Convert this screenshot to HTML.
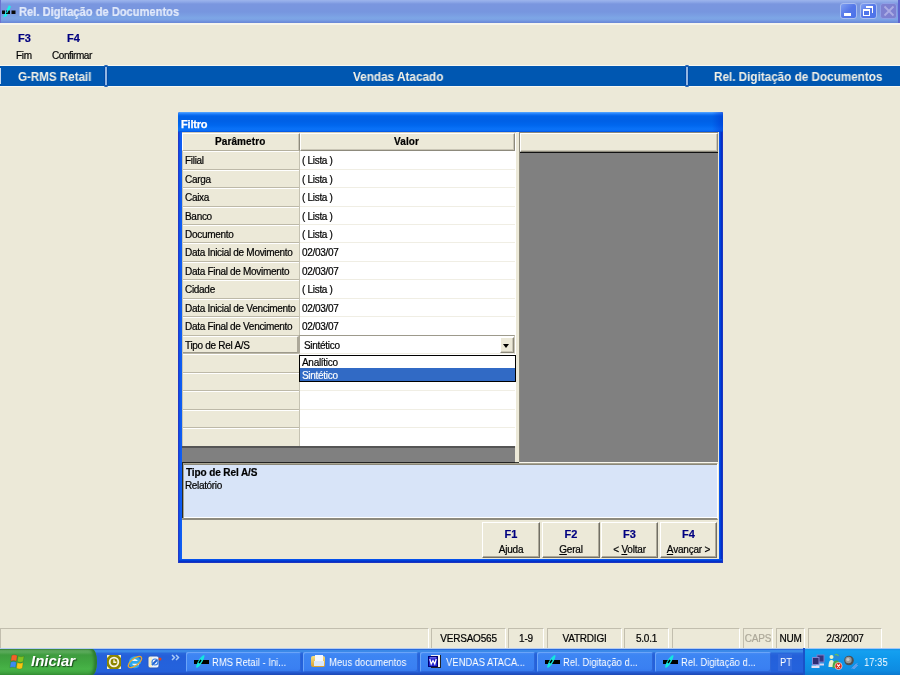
<!DOCTYPE html>
<html><head><meta charset="utf-8">
<style>
*{margin:0;padding:0;box-sizing:border-box}
html,body{width:900px;height:675px;overflow:hidden;background:#ECE9D8;font-family:"Liberation Sans",sans-serif;position:relative}
.a{position:absolute}
.t{position:absolute;white-space:nowrap;line-height:1;transform-origin:0 0;will-change:transform}
#tb{left:0;top:0;width:900px;height:23px;background:linear-gradient(#9DB5EC 0,#8DA8E8 2px,#7A96DF 4px,#7796DF 12px,#7DA6E6 18px,#7AA0E4 20px,#6D8CDA 22px,#6A88D6 23px)}
.tbtn{top:3px;width:17px;height:16px;border-radius:3px;border:1px solid #A9BDF0;background:linear-gradient(135deg,#7FA0F2 0,#5577E8 50%,#4A73EA 100%)}
.sep{top:65px;width:4px;height:22px}
.sep i{position:absolute;left:1px;top:2px;width:2px;height:18px;background:#94B6E2;box-shadow:-1px 0 0 #0049A6,1px 0 0 #0049A6}
.sep b{position:absolute;left:0;width:4px;height:2px;border-radius:50%;background:#1A5CB0}
.ht{color:#F2F0E6;font-weight:bold;font-size:12px}
.hc{background:#ECE9D8;border-top:1px solid #fff;border-left:1px solid #fff;border-right:1px solid #8D8A7C;border-bottom:1px solid #8D8A7C;box-shadow:inset -1px -1px 0 #C9C5B5}
.c1{font-size:10px;color:#000;letter-spacing:-0.3px;-webkit-text-stroke:0.2px #000}
.rg{-webkit-text-stroke:0.2px #000}
.btn{top:522px;width:58px;height:36px;background:#ECE9D8;border-top:1px solid #fff;border-left:1px solid #fff;border-right:1px solid #716F64;border-bottom:1px solid #716F64;box-shadow:inset -1px -1px 0 #ACA899}
.fk{font-size:11px;font-weight:bold;color:#000080;-webkit-text-stroke:0.2px #000080}
.sp{top:628px;height:20px;border-top:1px solid #C2BEAE;border-left:1px solid #C2BEAE;border-right:1px solid #fff}
.st{font-size:10px;color:#000;letter-spacing:-0.2px;-webkit-text-stroke:0.2px currentColor}
.tk{top:652px;height:20px;border-radius:2px;background:linear-gradient(#4A8EF7 0,#3D85F3 3px,#3A80F2 16px,#3479EC 20px);box-shadow:inset 1px 1px 0 #6AA4F9, inset -1px -1px 0 #2D66D8}
.tt{font-size:11px;color:#fff;transform:scaleX(0.86)}
</style></head><body>
<div id="tb" class="a"></div>
<div class="a" style="left:0;top:0;width:1px;height:23px;background:#6C73D0"></div>
<div class="a" style="left:898px;top:0;width:2px;height:23px;background:#5E62CE"></div>
<svg class="a" style="left:0;top:2px" width="18" height="18"><path d="M3.2,15.2 L6.6,14.2 L11,4.6 L8.8,3.2 Z" fill="#18F0E8"/><path d="M2,8.5H5V12H2ZM6,8.5H10V12H6ZM11.5,8.5H15.5V12H11.5Z" fill="#0A0A0A"/><path d="M6.6,11 L8.5,7" stroke="#18F0E8" stroke-width="1.2"/></svg>
<div class="t" style="left:19px;top:6px;font-size:12.5px;font-weight:bold;color:#E2EAFA;transform:scaleX(0.89);-webkit-text-stroke:0.2px #E2EAFA">Rel. Digitação de Documentos</div>
<div class="a tbtn" style="left:840px"><div class="a" style="left:3px;top:9px;width:7px;height:3px;background:#fff"></div></div>
<div class="a tbtn" style="left:860px"><div class="a" style="left:5px;top:2px;width:7px;height:7px;border-top:2px solid #fff;border-right:1px solid #fff"></div><div class="a" style="left:2px;top:5px;width:7px;height:7px;border:1px solid #fff;border-top-width:2px;background:#4F76EA"></div></div>
<div class="a tbtn" style="left:880px;background:#7E80D0;border-color:#8E9EE6"><svg class="a" style="left:0;top:0" width="15" height="14"><path d="M3.5 2.5L12.5 11.5M12.5 2.5L3.5 11.5" stroke="#ABABE4" stroke-width="1.8"/></svg></div>
<div class="a" style="left:0;top:23px;width:900px;height:2px;background:#F7F5EC"></div>
<div class="t fk" style="left:18px;top:33px">F3</div>
<div class="t rg" style="left:16px;top:51px;font-size:10px;letter-spacing:-0.3px">Fim</div>
<div class="t fk" style="left:67px;top:33px">F4</div>
<div class="t rg" style="left:52px;top:51px;font-size:10px;letter-spacing:-0.45px">Confirmar</div>
<div class="a" style="left:0;top:65px;width:900px;height:22px;background:#F8F7F0"></div>
<div class="a" style="left:0;top:66px;width:900px;height:20px;background:#0057B1"></div>
<div class="a sep" style="left:104px"><i></i><b style="top:0"></b><b style="top:20px"></b></div>
<div class="a" style="left:0;top:68px;width:1px;height:16px;background:#C8DAF0"></div>
<div class="a sep" style="left:685px"><i></i><b style="top:0"></b><b style="top:20px"></b></div>
<div class="t ht" style="left:18px;top:71px;transform:scaleX(0.965)">G-RMS Retail</div>
<div class="t ht" style="left:353px;top:71px;transform:scaleX(0.98)">Vendas Atacado</div>
<div class="t ht" style="left:714px;top:71px;transform:scaleX(0.975)">Rel. Digitação de Documentos</div>
<div class="a" style="left:178px;top:112px;width:545px;height:451px;background:#0032CC;border-radius:2px 2px 0 0"></div>
<div class="a" style="left:178px;top:112px;width:545px;height:20px;border-radius:2px 2px 0 0;background:linear-gradient(#5AA8FF 0,#3A94FF 1px,#1A7AFA 2px,#0062E8 4px,#0060E6 9px,#0066EE 13px,#0A72F8 17px,#086CF4 19px,#0048D8 20px)"></div>
<div class="a" style="left:712px;top:112px;width:11px;height:20px;background:linear-gradient(90deg,rgba(0,40,200,0),rgba(0,40,200,.45))"></div>
<div class="a" style="left:178px;top:132px;width:1px;height:431px;background:#2238C8"></div>
<div class="a" style="left:179px;top:132px;width:3px;height:428px;background:linear-gradient(90deg,#0846E0,#1262F5 70%,#0A58F0)"></div>
<div class="a" style="left:719px;top:132px;width:4px;height:431px;background:linear-gradient(90deg,#0A5AF4 0,#0048E4 25%,#0030C8 60%,#2838C0 100%)"></div>
<div class="a" style="left:179px;top:559px;width:543px;height:4px;background:linear-gradient(#0A5AF4 0,#0048E4 25%,#0030C8 60%,#2838C0 100%)"></div>
<div class="a" style="left:182px;top:132px;width:537px;height:427px;background:#ECE9D8"></div>
<div class="t" style="left:181px;top:119px;font-size:11px;font-weight:bold;color:#fff;letter-spacing:-0.2px;-webkit-text-stroke:0.25px #fff">Filtro</div>
<div class="a" style="left:182px;top:132px;width:334px;height:314px;background:#fff"></div>
<div class="a" style="left:182px;top:132px;width:117px;height:314px;background:#ECE9D8"></div>
<div class="a" style="left:182px;top:132px;width:334px;height:1px;background:#CFCBBB"></div>
<div class="a hc" style="left:182px;top:133px;width:118px;height:18px;border-bottom-color:#B4B09E;box-shadow:inset -1px 0 0 #C9C5B5"></div>
<div class="a hc" style="left:300px;top:133px;width:215px;height:18px"></div>
<div class="t rg" style="left:215px;top:137px;font-size:10px;font-weight:bold;letter-spacing:0.1px">Parâmetro</div>
<div class="t rg" style="left:394px;top:137px;font-size:10px;font-weight:bold;letter-spacing:0.1px">Valor</div>
<div class="a" style="left:183px;top:151px;width:116px;height:1px;background:#fff"></div>
<div class="a" style="left:182px;top:169px;width:117px;height:1px;background:#BDB9A8"></div>
<div class="a" style="left:300px;top:169px;width:215px;height:1px;background:#F0EEE4"></div>
<div class="t c1" style="left:185px;top:156px">Filial</div>
<div class="t c1" style="left:302px;top:156px">( Lista )</div>
<div class="a" style="left:183px;top:170px;width:116px;height:1px;background:#fff"></div>
<div class="a" style="left:182px;top:187px;width:117px;height:1px;background:#BDB9A8"></div>
<div class="a" style="left:300px;top:187px;width:215px;height:1px;background:#F0EEE4"></div>
<div class="t c1" style="left:185px;top:175px">Carga</div>
<div class="t c1" style="left:302px;top:175px">( Lista )</div>
<div class="a" style="left:183px;top:188px;width:116px;height:1px;background:#fff"></div>
<div class="a" style="left:182px;top:206px;width:117px;height:1px;background:#BDB9A8"></div>
<div class="a" style="left:300px;top:206px;width:215px;height:1px;background:#F0EEE4"></div>
<div class="t c1" style="left:185px;top:193px">Caixa</div>
<div class="t c1" style="left:302px;top:193px">( Lista )</div>
<div class="a" style="left:183px;top:207px;width:116px;height:1px;background:#fff"></div>
<div class="a" style="left:182px;top:224px;width:117px;height:1px;background:#BDB9A8"></div>
<div class="a" style="left:300px;top:224px;width:215px;height:1px;background:#F0EEE4"></div>
<div class="t c1" style="left:185px;top:212px">Banco</div>
<div class="t c1" style="left:302px;top:212px">( Lista )</div>
<div class="a" style="left:183px;top:225px;width:116px;height:1px;background:#fff"></div>
<div class="a" style="left:182px;top:242px;width:117px;height:1px;background:#BDB9A8"></div>
<div class="a" style="left:300px;top:242px;width:215px;height:1px;background:#F0EEE4"></div>
<div class="t c1" style="left:185px;top:230px">Documento</div>
<div class="t c1" style="left:302px;top:230px">( Lista )</div>
<div class="a" style="left:183px;top:243px;width:116px;height:1px;background:#fff"></div>
<div class="a" style="left:182px;top:261px;width:117px;height:1px;background:#BDB9A8"></div>
<div class="a" style="left:300px;top:261px;width:215px;height:1px;background:#F0EEE4"></div>
<div class="t c1" style="left:185px;top:248px">Data Inicial de Movimento</div>
<div class="t c1" style="left:302px;top:248px">02/03/07</div>
<div class="a" style="left:183px;top:262px;width:116px;height:1px;background:#fff"></div>
<div class="a" style="left:182px;top:279px;width:117px;height:1px;background:#BDB9A8"></div>
<div class="a" style="left:300px;top:279px;width:215px;height:1px;background:#F0EEE4"></div>
<div class="t c1" style="left:185px;top:267px">Data Final de Movimento</div>
<div class="t c1" style="left:302px;top:267px">02/03/07</div>
<div class="a" style="left:183px;top:280px;width:116px;height:1px;background:#fff"></div>
<div class="a" style="left:182px;top:298px;width:117px;height:1px;background:#BDB9A8"></div>
<div class="a" style="left:300px;top:298px;width:215px;height:1px;background:#F0EEE4"></div>
<div class="t c1" style="left:185px;top:285px">Cidade</div>
<div class="t c1" style="left:302px;top:285px">( Lista )</div>
<div class="a" style="left:183px;top:299px;width:116px;height:1px;background:#fff"></div>
<div class="a" style="left:182px;top:316px;width:117px;height:1px;background:#BDB9A8"></div>
<div class="a" style="left:300px;top:316px;width:215px;height:1px;background:#F0EEE4"></div>
<div class="t c1" style="left:185px;top:304px">Data Inicial de Vencimento</div>
<div class="t c1" style="left:302px;top:304px">02/03/07</div>
<div class="a" style="left:183px;top:317px;width:116px;height:1px;background:#fff"></div>
<div class="a" style="left:182px;top:335px;width:117px;height:1px;background:#BDB9A8"></div>
<div class="a" style="left:300px;top:335px;width:215px;height:1px;background:#F0EEE4"></div>
<div class="t c1" style="left:185px;top:322px">Data Final de Vencimento</div>
<div class="t c1" style="left:302px;top:322px">02/03/07</div>
<div class="a" style="left:183px;top:336px;width:116px;height:1px;background:#fff"></div>
<div class="a" style="left:182px;top:353px;width:117px;height:1px;background:#BDB9A8"></div>
<div class="a" style="left:300px;top:353px;width:215px;height:1px;background:#F0EEE4"></div>
<div class="t c1" style="left:185px;top:341px">Tipo de Rel A/S</div>
<div class="a" style="left:183px;top:354px;width:116px;height:1px;background:#fff"></div>
<div class="a" style="left:182px;top:372px;width:117px;height:1px;background:#BDB9A8"></div>
<div class="a" style="left:300px;top:372px;width:215px;height:1px;background:#F0EEE4"></div>
<div class="a" style="left:183px;top:373px;width:116px;height:1px;background:#fff"></div>
<div class="a" style="left:182px;top:390px;width:117px;height:1px;background:#BDB9A8"></div>
<div class="a" style="left:300px;top:390px;width:215px;height:1px;background:#F0EEE4"></div>
<div class="a" style="left:183px;top:391px;width:116px;height:1px;background:#fff"></div>
<div class="a" style="left:182px;top:409px;width:117px;height:1px;background:#BDB9A8"></div>
<div class="a" style="left:300px;top:409px;width:215px;height:1px;background:#F0EEE4"></div>
<div class="a" style="left:183px;top:410px;width:116px;height:1px;background:#fff"></div>
<div class="a" style="left:182px;top:427px;width:117px;height:1px;background:#BDB9A8"></div>
<div class="a" style="left:300px;top:427px;width:215px;height:1px;background:#F0EEE4"></div>
<div class="a" style="left:183px;top:428px;width:116px;height:1px;background:#fff"></div>
<div class="a" style="left:182px;top:446px;width:117px;height:1px;background:#BDB9A8"></div>
<div class="a" style="left:300px;top:446px;width:215px;height:1px;background:#F0EEE4"></div>
<div class="a" style="left:182px;top:151px;width:1px;height:295px;background:#C9C5B5"></div>
<div class="a" style="left:299px;top:151px;width:1px;height:295px;background:#C5C2B2"></div>
<div class="a" style="left:183px;top:336px;width:116px;height:17px;border-top:1px solid #fff;border-right:2px solid #ACA899;border-bottom:1px solid #9D9A8C"></div>
<div class="a" style="left:182px;top:446px;width:333px;height:17px;background:#808080;border-top:2px solid #555;border-bottom:1px solid #222"></div>
<div class="a" style="left:519px;top:132px;width:199px;height:330px;background:#808080;border-left:1px solid #8D8A7C;border-top:1px solid #8D8A7C"></div>
<div class="a hc" style="left:520px;top:133px;width:198px;height:19px"></div>
<div class="a" style="left:520px;top:152px;width:198px;height:1px;background:#111"></div>
<div class="a" style="left:519px;top:462px;width:199px;height:1px;background:#F8F6EE"></div>
<div class="a" style="left:515px;top:462px;width:4px;height:1px;background:#3A3A34"></div>
<div class="a" style="left:182px;top:463px;width:536px;height:57px;background:#D8E4F8;border-top:1px solid #A8A492;box-shadow:inset 0 1px 0 #8A8778,inset 0 -1px 0 #fff;border-left:2px solid #A8A490;border-bottom:2px solid #8D8A7E;border-right:1px solid #fff"></div>
<div class="a" style="left:182px;top:462px;width:1px;height:56px;background:#2A2A22"></div>
<div class="t rg" style="left:186px;top:468px;font-size:10px;font-weight:bold;letter-spacing:-0.1px">Tipo de Rel A/S</div>
<div class="t rg" style="left:185px;top:481px;font-size:10px;letter-spacing:-0.35px">Relatório</div>
<div class="a btn" style="left:482px;width:58px"></div>
<div class="t fk" style="left:482px;width:58px;text-align:center;top:529px">F1</div>
<div class="t rg" style="left:482px;width:58px;text-align:center;top:545px;font-size:10px;letter-spacing:-0.2px">Ajuda</div>
<div class="a btn" style="left:542px;width:58px"></div>
<div class="t fk" style="left:542px;width:58px;text-align:center;top:529px">F2</div>
<div class="t rg" style="left:542px;width:58px;text-align:center;top:545px;font-size:10px;letter-spacing:-0.2px"><u>G</u>eral</div>
<div class="a btn" style="left:601px;width:57px"></div>
<div class="t fk" style="left:601px;width:57px;text-align:center;top:529px">F3</div>
<div class="t rg" style="left:601px;width:57px;text-align:center;top:545px;font-size:10px;letter-spacing:-0.2px">&lt; <u>V</u>oltar</div>
<div class="a btn" style="left:660px;width:57px"></div>
<div class="t fk" style="left:660px;width:57px;text-align:center;top:529px">F4</div>
<div class="t rg" style="left:660px;width:57px;text-align:center;top:545px;font-size:10px;letter-spacing:-0.2px"><u>A</u>vançar &gt;</div>
<div class="a" style="left:299px;top:335px;width:216px;height:19px;background:#fff;border-top:1px solid #9D9A8C;border-left:1px solid #ACA899;border-right:1px solid #C9C5B5;border-bottom:1px solid #F0EEE4"></div>
<div class="t c1" style="left:304px;top:341px">Sintético</div>
<div class="a hc" style="left:500px;top:337px;width:14px;height:16px"></div>
<div class="a" style="left:503px;top:344px;width:0;height:0;border-left:3.5px solid transparent;border-right:3.5px solid transparent;border-top:4px solid #000"></div>
<div class="a" style="left:299px;top:355px;width:217px;height:27px;background:#fff;border:1px solid #000"></div>
<div class="a" style="left:300px;top:368px;width:215px;height:13px;background:#316AC5"></div>
<div class="t c1" style="left:302px;top:358px">Analítico</div>
<div class="t c1" style="left:302px;top:371px;color:#fff;-webkit-text-stroke:0.15px #fff">Sintético</div>
<div class="a sp" style="left:0;width:429px"></div>
<div class="a sp" style="left:431px;width:75px"></div>
<div class="t st" style="left:431px;width:75px;text-align:center;top:634px;color:#000">VERSAO565</div>
<div class="a sp" style="left:508px;width:36px"></div>
<div class="t st" style="left:508px;width:36px;text-align:center;top:634px;color:#000">1-9</div>
<div class="a sp" style="left:547px;width:75px"></div>
<div class="t st" style="left:547px;width:75px;text-align:center;top:634px;color:#000">VATRDIGI</div>
<div class="a sp" style="left:624px;width:45px"></div>
<div class="t st" style="left:624px;width:45px;text-align:center;top:634px;color:#000">5.0.1</div>
<div class="a sp" style="left:672px;width:68px"></div>
<div class="a sp" style="left:743px;width:30px"></div>
<div class="t st" style="left:743px;width:30px;text-align:center;top:634px;color:#ACA899">CAPS</div>
<div class="a sp" style="left:776px;width:29px"></div>
<div class="t st" style="left:776px;width:29px;text-align:center;top:634px;color:#000">NUM</div>
<div class="a sp" style="left:808px;width:74px"></div>
<div class="t st" style="left:808px;width:74px;text-align:center;top:634px;color:#000">2/3/2007</div>
<div class="a" style="left:0;top:648px;width:900px;height:27px;background:linear-gradient(#B4CCF2 0,#B4CCF2 1px,#2A6ADC 1px,#2A6ADC 2px,#3A88E8 2px,#3C8AE8 4px,#2A68DC 5px,#2460DA 8px,#2462DC 20px,#2460DA 24px,#2254C8 25px,#1C48B4 27px)"></div>
<div class="a" style="left:0;top:649px;width:97px;height:26px;border-radius:0 5px 5px 0/0 13px 13px 0;background:linear-gradient(#2F7A2F 0,#5DA95D 1px,#5AAA5A 3px,#3E9C3E 6px,#41A841 14px,#47B347 20px,#3A9A3A 26px);box-shadow:inset -3px 0 3px #2C7A2C"></div>
<svg class="a" style="left:9px;top:654px" width="17" height="16"><g stroke="rgba(0,0,0,.25)" stroke-width=".5"><path d="M2.6,1.6 C4.2,0.6 6.2,0.6 8.2,1.6 L7.4,7.2 C5.4,6.2 3.4,6.2 1.8,7.2 Z" fill="#F2622A"/><path d="M9.2,2 C11.2,3 13.2,3 15,2 L14.2,7.6 C12.4,8.6 10.4,8.6 8.4,7.6 Z" fill="#80C320"/><path d="M1.7,8.2 C3.3,7.2 5.3,7.2 7.3,8.2 L6.5,13.8 C4.5,12.8 2.5,12.8 0.9,13.8 Z" fill="#3C8CF0"/><path d="M8.3,8.6 C10.3,9.6 12.3,9.6 14.1,8.6 L13.3,14.2 C11.5,15.2 9.5,15.2 7.5,14.2 Z" fill="#FAC610"/></g></svg>
<div class="t" style="left:31px;top:653px;font-size:15px;font-weight:bold;font-style:italic;color:#fff;text-shadow:1px 1px 1px #1B4A1B">Iniciar</div>
<svg class="a" style="left:107px;top:655px" width="14" height="14"><rect width="14" height="14" fill="#8C8600"/><path d="M0,0H3L0,3ZM14,0H11L14,3ZM0,14H3L0,11ZM14,14H11L14,11Z" fill="#F4F0D0"/><circle cx="7" cy="7" r="4.3" stroke="#F8F4E0" stroke-width="1.8" fill="none"/><path d="M7,4.5V7.3H9.3" stroke="#F8F4E0" stroke-width="1.4" fill="none"/></svg>
<svg class="a" style="left:126px;top:653px" width="18" height="18"><circle cx="9" cy="9" r="4.8" fill="#E8F6FF"/><path d="M4.6,9.3 H13.4 A4.6,4.6 0 1 0 12.2,12.4" stroke="#2AA8F0" stroke-width="2.8" fill="none"/><ellipse cx="9" cy="9" rx="8" ry="3.6" transform="rotate(-38 9 9)" stroke="#E8A830" stroke-width="1.3" fill="none"/></svg>
<svg class="a" style="left:147px;top:654px" width="16" height="16"><rect x="1" y="2" width="11" height="12" rx="2" fill="#F0F4FC" stroke="#2A5AB8" stroke-width="1"/><rect x="2" y="3" width="3" height="10" fill="#F8F0C8"/><path d="M5,11 L10,6" stroke="#1E60D0" stroke-width="2"/><circle cx="8" cy="8" r="3" stroke="#3A80E0" stroke-width="1.2" fill="none"/><circle cx="13" cy="5" r="1.5" fill="#E04020"/></svg>
<svg class="a" style="left:171px;top:654px" width="10" height="7"><path d="M1 1L3.5 3.5L1 6M5 1L7.5 3.5L5 6" stroke="#A8CCF8" stroke-width="1.5" fill="none"/></svg>
<div class="a tk" style="left:186px;width:115px"></div>
<svg class="a" style="left:194px;top:654px" width="16" height="15"><path d="M0,6H15V10H0Z" fill="#000"/><path d="M2.5,13.8 C0.8,12.5 6.5,1.2 10.2,1 C11.8,2.5 6,13.8 2.5,13.8Z" fill="#14E6DE"/><path d="M5,9 L7,6" stroke="#000" stroke-width="1.5"/></svg>
<div class="t tt" style="left:212px;top:657px">RMS Retail - Ini...</div>
<div class="a tk" style="left:303px;width:115px"></div>
<div class="a" style="left:311px;top:656px;width:14px;height:11px;background:linear-gradient(#F8E080,#D8A030);border-radius:2px"></div>
<div class="a" style="left:315px;top:655px;width:8px;height:6px;background:#F4F8FF"></div>
<div class="a" style="left:314px;top:661px;width:10px;height:5px;background:#DCE8F8"></div>
<div class="t tt" style="left:329px;top:657px">Meus documentos</div>
<div class="a tk" style="left:420px;width:115px"></div>
<div class="a" style="left:431px;top:655px;width:10px;height:13px;background:#F4F4F0;border-right:1px solid #222;border-bottom:1px solid #222"></div>
<svg class="a" style="left:428px;top:656px" width="10" height="11"><rect x=".5" y=".5" width="9" height="10" fill="#2424D0" stroke="#000070"/><path d="M1.8,3 L3.2,8 L5,4.5 L6.8,8 L8.2,3" stroke="#fff" stroke-width="1.2" fill="none"/><path d="M2,1.8H8" stroke="#8080F0" stroke-width="1"/></svg>
<div class="t tt" style="left:446px;top:657px">VENDAS ATACA...</div>
<div class="a tk" style="left:537px;width:116px"></div>
<svg class="a" style="left:545px;top:654px" width="16" height="15"><path d="M0,6H15V10H0Z" fill="#000"/><path d="M2.5,13.8 C0.8,12.5 6.5,1.2 10.2,1 C11.8,2.5 6,13.8 2.5,13.8Z" fill="#14E6DE"/><path d="M5,9 L7,6" stroke="#000" stroke-width="1.5"/></svg>
<div class="t tt" style="left:563px;top:657px">Rel. Digitação d...</div>
<div class="a tk" style="left:655px;width:116px"></div>
<svg class="a" style="left:663px;top:654px" width="16" height="15"><path d="M0,6H15V10H0Z" fill="#000"/><path d="M2.5,13.8 C0.8,12.5 6.5,1.2 10.2,1 C11.8,2.5 6,13.8 2.5,13.8Z" fill="#14E6DE"/><path d="M5,9 L7,6" stroke="#000" stroke-width="1.5"/></svg>
<div class="t tt" style="left:681px;top:657px">Rel. Digitação d...</div>
<div class="a" style="left:778px;top:654px;width:14px;height:17px;background:#3A70E0;opacity:.6"></div>
<div class="t tt" style="left:780px;top:657px">PT</div>
<div class="a" style="left:803px;top:648px;width:97px;height:27px;background:linear-gradient(#A0C8F8 0,#A0C8F8 1px,#1590E8 1px,#14A0F0 3px,#0F96EA 12px,#0E8CE2 22px,#0C7AD0 27px);border-left:2px solid #1A52C8"></div>
<svg class="a" style="left:808px;top:650px" width="54" height="22"><rect x="9" y="5" width="7" height="7" fill="#34347E" stroke="#7A7AC8" stroke-width="1"/><path d="M8,13.5H16V15.5H8Z" fill="#D8D4F0"/><rect x="4.5" y="7.5" width="6.5" height="7" fill="#2E2E74" stroke="#8484D0" stroke-width="1"/><path d="M3.5,15.5H11.5V18H3.5Z" fill="#E4E0F4"/><circle cx="23.5" cy="7" r="2" fill="#F0F4C0"/><path d="M20.5,17 C20.5,11 22,10 23.5,10 C25,10 26.5,11 26.5,17Z" fill="#E8F0D0"/><circle cx="29" cy="6.5" r="3" fill="#2A8AD8"/><path d="M27,5 C28,4 30,4.5 30.5,6" stroke="#60C060" stroke-width="1.2" fill="none"/><path d="M24.5,18 C24.5,11.5 26.5,10.5 28.5,10.5 C30.5,10.5 32,11.5 32,18Z" fill="#48A848"/><circle cx="30.5" cy="16" r="3.6" fill="#D82818" stroke="#fff" stroke-width=".6"/><path d="M29,14.5L32,17.5M32,14.5L29,17.5" stroke="#fff" stroke-width="1.1"/><circle cx="41" cy="10.5" r="4.8" fill="#505050"/><circle cx="40.5" cy="10" r="3.2" fill="#9A9A9A"/><circle cx="40" cy="9.5" r="1.6" fill="#C8C8C8"/><path d="M44,18.5 L49,13.5 M45.5,19 L49.5,15" stroke="#B8B0F0" stroke-width=".9"/></svg>
<div class="t tt" style="left:864px;top:657px">17:35</div>
</body></html>
